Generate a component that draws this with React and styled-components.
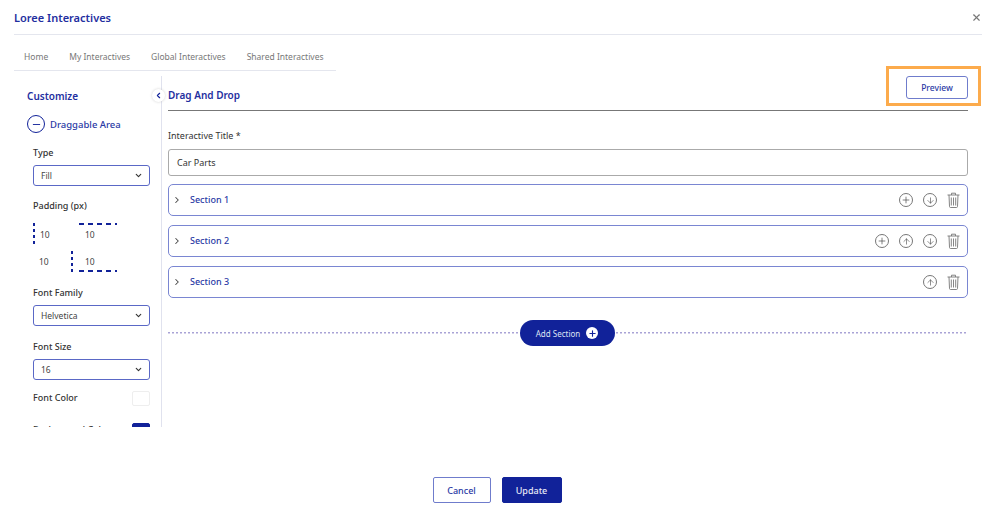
import React from 'react'
import styled, { createGlobalStyle } from 'styled-components'
import { X, ChevronLeft, ChevronRight, ChevronDown, Plus, ArrowUp, ArrowDown, Minus } from 'lucide-react'

const navy = '#112299'
const GlobalStyle = createGlobalStyle`
  html, body { margin: 0; background: #fff; }
  body { font-family: "Noto Sans", "Open Sans", sans-serif; color: #333; }
  * { box-sizing: border-box; }
`

const Modal = styled.div`
  position: relative;
  width: 992px;
  height: 520px;
  padding: 0 10px 0 14px;
  overflow: hidden;
  background: #fff;
`
const Header = styled.header`
  display: flex;
  justify-content: space-between;
  align-items: center;
  height: 35px;
  border-bottom: 1px solid #e4e6ee;
`
const ModalTitle = styled.h1`
  margin: 0;
  font-size: 11px;
  font-weight: 600;
  color: #1f2f9f;
`
const Close = styled.button`
  display: flex;
  padding: 0;
  border: 0;
  background: none;
  color: #777;
`
const Tabs = styled.nav`
  display: flex;
  gap: 21px;
  width: 322px;
  height: 36px;
  padding: 7px 0 0 10px;
  align-items: center;
  border-bottom: 1px solid #e4e6ee;
  font-size: 8.5px;
  white-space: nowrap;
  color: #777;
`
const Body = styled.div`
  display: flex;
  height: 357px;
  margin-top: 5px;
`
const Sidebar = styled.aside`
  position: relative;
  flex: 0 0 148px;
  height: 351px;
  padding: 13px 11px 0 13px;
  border-right: 1px solid #e0e2ee;
`
const SideScroll = styled.div`
  height: 338px;
  padding-left: 6px;
  overflow: hidden;
`
const SideTitle = styled.h2`
  margin: 0 0 11px -6px;
  font-size: 10px;
  line-height: 14px;
  font-weight: 600;
  color: #1f2f9f;
`
const AreaRow = styled.div`
  display: flex;
  align-items: center;
  gap: 5px;
  height: 20px;
  margin: 0 0 13px -6px;
  font-size: 9.5px;
  font-weight: 500;
  color: #2a3aa5;
`
const MinusCircle = styled.span`
  display: flex;
  align-items: center;
  justify-content: center;
  width: 18px;
  height: 18px;
  border: 1.5px solid ${navy};
  border-radius: 50%;
  color: ${navy};
`
const FieldLabel = styled.div`
  font-size: 9px;
  line-height: 12px;
  font-weight: 500;
  color: #333;
`
const Select = styled.div`
  display: flex;
  align-items: center;
  justify-content: space-between;
  height: 21px;
  margin: 6px 0 ${p => p.$gap}px;
  padding: 0 6px 0 7px;
  border: 1px solid #5a68c6;
  border-radius: 3px;
  font-size: 8.5px;
  color: #444;
`
const PaddingGrid = styled.div`
  display: grid;
  grid-template-columns: 38px 46px;
  grid-template-rows: 22px 21px;
  row-gap: 6px;
  margin: 11px 0 15px;
  font-size: 8.5px;
  color: #444;
`
const dashH = `repeating-linear-gradient(90deg, ${navy} 0 5px, transparent 5px 9px)`
const dashV = `repeating-linear-gradient(180deg, ${navy} 0 3px, transparent 3px 6px)`
const PadCell = styled.div`
  display: flex;
  align-items: center;
  padding-left: ${p => p.$pad}px;
  background: ${p => p.$edge ? `${dashV} left top / 2px 100% no-repeat` : 'none'};
`
const PadValue = styled.span`
  display: flex;
  align-items: center;
  width: 38px;
  height: 100%;
  padding-left: 6px;
  background: ${dashH} left ${p => p.$at} / 100% 2px no-repeat;
`
const ColorRow = styled.div`
  display: flex;
  justify-content: space-between;
  align-items: center;
  height: 16px;
  margin-bottom: 16px;
`
const Swatch = styled.span`
  width: 18px;
  height: 15px;
  border: 1px solid ${p => p.$color === '#fff' ? '#eee' : p.$color};
  border-radius: 2px;
  background: ${p => p.$color};
`
const Collapse = styled.button`
  position: absolute;
  top: 13px;
  right: -4px;
  display: flex;
  align-items: center;
  justify-content: center;
  width: 13px;
  height: 13px;
  padding: 0;
  border: 0;
  border-radius: 50%;
  background: #fff;
  box-shadow: 0 0 3px rgba(0, 0, 0, .18);
  color: ${navy};
`
const Main = styled.main`
  flex: 0 0 800px;
  margin-left: 6px;
`
const MainHeader = styled.div`
  display: flex;
  justify-content: space-between;
  align-items: flex-start;
  height: 35px;
  border-bottom: 1px solid #777;
`
const MainTitle = styled.h2`
  margin: 12px 0 0;
  font-size: 10px;
  line-height: 14px;
  font-weight: 600;
  color: #1f2f9f;
`
const PreviewButton = styled.button`
  width: 62px;
  height: 23px;
  padding: 0;
  border: 1px solid #6f7ccc;
  border-radius: 3px;
  background: #fff;
  font: 500 8.5px "Noto Sans", sans-serif;
  color: #2a3aa5;
`
const Highlight = styled.div`
  position: absolute;
  left: 886px;
  top: 66px;
  width: 95px;
  height: 40px;
  border: 3px solid #fcab4c;
`
const TitleLabel = styled(FieldLabel)`
  margin-top: 19px;
  font-weight: 400;
`
const TitleInput = styled.div`
  display: flex;
  align-items: center;
  height: 27px;
  margin: 7px 0 8px;
  padding: 0 8px;
  border: 1px solid #aaa;
  border-radius: 3px;
  font-size: 9px;
  color: #333;
`
const SectionList = styled.div`
  display: flex;
  flex-direction: column;
  gap: 9px;
`
const SectionRow = styled.div`
  display: flex;
  align-items: center;
  height: 32px;
  padding: 0 7px 0 3px;
  border: 1px solid #7a86d2;
  border-radius: 5px;
  color: #444;
`
const SectionName = styled.span`
  margin-left: 8px;
  padding-bottom: 1px;
  font-size: 9px;
  font-weight: 500;
  color: #2a3aa5;
`
const Actions = styled.div`
  display: flex;
  align-items: center;
  gap: 10px;
  margin-left: auto;
`
const RoundIcon = styled.span`
  display: flex;
  align-items: center;
  justify-content: center;
  width: 14px;
  height: 14px;
  border: 1px solid #777;
  border-radius: 50%;
  color: #444;
`
const AddDivider = styled.div`
  display: flex;
  align-items: center;
  justify-content: center;
  height: 26px;
  margin-top: 22px;
  background: repeating-linear-gradient(90deg, #a9a3d6 0 2px, transparent 2px 4px) center / 100% 1.5px no-repeat;
`
const AddButton = styled.button`
  display: flex;
  align-items: center;
  justify-content: center;
  gap: 6px;
  width: 95px;
  height: 26px;
  margin-left: -2px;
  padding: 0;
  border: 0;
  border-radius: 13px;
  background: ${navy};
  font: 400 8px "Noto Sans", sans-serif;
  color: #dfe2f3;
`
const PlusDot = styled.span`
  display: flex;
  align-items: center;
  justify-content: center;
  width: 12px;
  height: 12px;
  border-radius: 50%;
  background: #fff;
  color: ${navy};
`
const Footer = styled.footer`
  display: flex;
  justify-content: center;
  gap: 11px;
  margin-top: 44px;
  padding-right: 2px;
`
const FooterButton = styled.button`
  width: ${p => p.$primary ? 60 : 58}px;
  height: 26px;
  padding: 0;
  border: 1px solid ${p => p.$primary ? navy : '#6f7ccc'};
  border-radius: 2px;
  background: ${p => p.$primary ? navy : '#fff'};
  font: 500 9px "Noto Sans", sans-serif;
  color: ${p => p.$primary ? '#e6e8f6' : '#2a3aa5'};
`

const Trash = () => (
  <svg width="13" height="16" viewBox="0 0 13 16" fill="none" stroke="#777" strokeWidth="0.9">
    <path d="M.5 3h12M4.5 3V1.2h4V3M2 3l.5 11.5c0 .6.4 1 1 1h6c.6 0 1-.4 1-1L11 3M4.3 5.5v8M6.5 5.5v8M8.7 5.5v8" />
  </svg>
)

const SelectArrow = () => <ChevronDown size={9} strokeWidth={3} color="#333" />

const sections = [
  { name: 'Section 1', add: true, down: true },
  { name: 'Section 2', add: true, up: true, down: true },
  { name: 'Section 3', up: true },
]

const SectionItem = ({ name, add, up, down }) => (
  <SectionRow>
    <ChevronRight size={10} strokeWidth={2.5} />
    <SectionName>{name}</SectionName>
    <Actions>
      {add && <RoundIcon><Plus size={10} strokeWidth={1.6} /></RoundIcon>}
      {up && <RoundIcon><ArrowUp size={9} strokeWidth={1.6} /></RoundIcon>}
      {down && <RoundIcon><ArrowDown size={9} strokeWidth={1.6} /></RoundIcon>}
      <Trash />
    </Actions>
  </SectionRow>
)

const App = () => (
  <Modal>
    <GlobalStyle />
    <Header>
      <ModalTitle>Loree Interactives</ModalTitle>
      <Close><X size={11} strokeWidth={2.5} /></Close>
    </Header>
    <Tabs>
      <span>Home</span>
      <span>My Interactives</span>
      <span>Global Interactives</span>
      <span>Shared Interactives</span>
    </Tabs>
    <Body>
      <Sidebar>
        <SideScroll>
          <SideTitle>Customize</SideTitle>
          <AreaRow>
            <MinusCircle><Minus size={11} strokeWidth={2} /></MinusCircle>
            Draggable Area
          </AreaRow>
          <FieldLabel>Type</FieldLabel>
          <Select $gap={14}>Fill <SelectArrow /></Select>
          <FieldLabel>Padding (px)</FieldLabel>
          <PaddingGrid>
            <PadCell $edge $pad={7}>10</PadCell>
            <PadCell $pad={8}><PadValue $at="top">10</PadValue></PadCell>
            <PadCell $pad={6}>10</PadCell>
            <PadCell $edge $pad={8}><PadValue $at="bottom">10</PadValue></PadCell>
          </PaddingGrid>
          <FieldLabel>Font Family</FieldLabel>
          <Select $gap={15}>Helvetica <SelectArrow /></Select>
          <FieldLabel>Font Size</FieldLabel>
          <Select $gap={10}>16 <SelectArrow /></Select>
          <ColorRow><FieldLabel>Font Color</FieldLabel><Swatch $color="#fff" /></ColorRow>
          <ColorRow><FieldLabel>Background Color</FieldLabel><Swatch $color={navy} /></ColorRow>
        </SideScroll>
        <Collapse><ChevronLeft size={9} strokeWidth={3} /></Collapse>
      </Sidebar>
      <Main>
        <MainHeader>
          <MainTitle>Drag And Drop</MainTitle>
          <PreviewButton>Preview</PreviewButton>
        </MainHeader>
        <TitleLabel>Interactive Title *</TitleLabel>
        <TitleInput>Car Parts</TitleInput>
        <SectionList>
          {sections.map(s => <SectionItem key={s.name} {...s} />)}
        </SectionList>
        <AddDivider>
          <AddButton>Add Section <PlusDot><Plus size={9} strokeWidth={3} /></PlusDot></AddButton>
        </AddDivider>
      </Main>
    </Body>
    <Footer>
      <FooterButton>Cancel</FooterButton>
      <FooterButton $primary>Update</FooterButton>
    </Footer>
    <Highlight />
  </Modal>
)

export default App
